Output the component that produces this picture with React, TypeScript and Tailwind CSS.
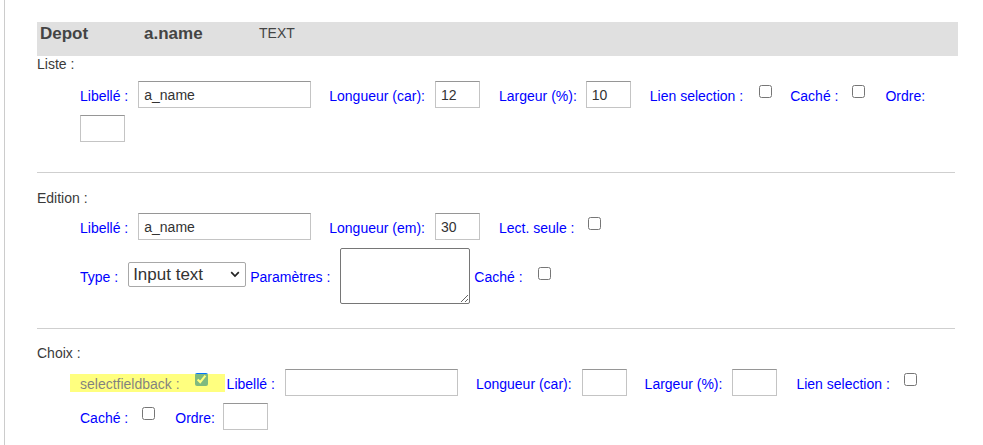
import React from "react";

const Lbl = ({ children, className = "" }: { children: React.ReactNode; className?: string }) => (
  <span className={`text-[#0000ff] whitespace-nowrap mt-[2px] leading-[16px] ${className}`}>{children}</span>
);

const TextIn = ({ w, value = "", className = "" }: { w: string; value?: string; className?: string }) => (
  <input
    type="text"
    defaultValue={value}
    className={`${w} h-[27px] shrink-0 border border-[#c4c4c4] border-t-[#969696] bg-white px-[5px] text-[14px] text-[#333] outline-none ${className}`}
  />
);

const Check = ({ checked = false, className = "" }: { checked?: boolean; className?: string }) => (
  <input
    type="checkbox"
    defaultChecked={checked}
    className={`m-0 mb-[6px] h-[13px] w-[13px] shrink-0 ${className}`}
  />
);

export default function App() {
  return (
    <div className="w-[983px] h-[445px] overflow-hidden bg-white font-['Liberation_Sans',Arial,sans-serif] text-[14px] text-[#3a3a3a]">
      <div className="ml-[4px] h-full border-l border-[#cccccc] pl-[32px] pt-[22px]">
        {/* header */}
        <div className="flex h-[34px] w-[921px] items-start bg-[#e0e0e0] pt-[2px] text-[#444]">
          <div className="w-[107px] pl-[3px] text-[17px] font-bold leading-[20px]">Depot</div>
          <div className="w-[115px] text-[17px] font-bold leading-[20px]">a.name</div>
          <div className="pt-[1px] text-[14px] leading-[16px]">TEXT</div>
        </div>

        {/* Liste */}
        <div className="leading-[16px]">Liste :</div>
        <div className="mt-[9px] pl-[43px]">
          <div className="flex h-[27px] items-center">
            <Lbl className="mr-[10px]">Libellé :</Lbl>
            <TextIn w="w-[173px]" value="a_name" className="mr-[18px]" />
            <Lbl className="mr-[10px]">Longueur (car):</Lbl>
            <TextIn w="w-[45px]" value="12" className="mr-[19px]" />
            <Lbl className="mr-[9px]">Largeur (%):</Lbl>
            <TextIn w="w-[45px]" value="10" className="mr-[19px]" />
            <Lbl className="mr-[16px]">Lien selection :</Lbl>
            <Check className="mr-[18px]" />
            <Lbl className="mr-[14px]">Caché :</Lbl>
            <Check className="mr-[20px]" />
            <Lbl>Ordre:</Lbl>
          </div>
          <div className="mt-[7px] flex h-[27px] items-center">
            <TextIn w="w-[45px]" />
          </div>
        </div>

        <div className="mt-[30px] h-px w-[918px] bg-[#cfcfcf]" />

        {/* Edition */}
        <div className="mt-[17px] leading-[16px]">Edition :</div>
        <div className="mt-[7px] pl-[43px]">
          <div className="flex h-[27px] items-center">
            <Lbl className="mr-[10px]">Libellé :</Lbl>
            <TextIn w="w-[173px]" value="a_name" className="mr-[18px]" />
            <Lbl className="mr-[10px]">Longueur (em):</Lbl>
            <TextIn w="w-[45px]" value="30" className="mr-[19px]" />
            <Lbl className="mr-[14px]">Lect. seule :</Lbl>
            <Check />
          </div>
          <div className="mt-[8px] flex h-[56px] items-center">
            <Lbl className="mr-[10px]">Type :</Lbl>
            <div className="relative mb-[3px] mr-[4px] h-[25px] w-[118px] shrink-0">
              <select
                defaultValue="text"
                className="h-full w-full appearance-none rounded-[2px] border border-[#a8a8a8] bg-white pl-[4px] text-[17px] leading-[23px] text-[#333] outline-none"
              >
                <option value="text">Input text</option>
              </select>
              <svg
                className="pointer-events-none absolute right-[6px] top-[9px]"
                width="10"
                height="7"
                viewBox="0 0 10 7"
              >
                <path d="M1.2 1.2 L5 5 L8.8 1.2" fill="none" stroke="#222" strokeWidth="1.7" />
              </svg>
            </div>
            <Lbl className="mr-[10px]">Paramètres :</Lbl>
            <textarea className="mr-[4px] h-[56px] w-[130px] shrink-0 rounded-[2px] border border-[#767676] bg-white outline-none" />
            <Lbl className="mr-[15px]">Caché :</Lbl>
            <Check />
          </div>
        </div>

        <div className="mt-[24px] h-px w-[918px] bg-[#cfcfcf]" />

        {/* Choix */}
        <div className="mt-[16px] leading-[16px]">Choix :</div>
        <div className="mt-[8px] pl-[43px]">
          <div className="flex h-[27px] items-center">
            <div className="relative mr-[19px] flex self-stretch items-center">
              <Lbl className="mr-[15px]">selectfieldback :</Lbl>
              <Check checked />
              <div className="pointer-events-none absolute left-[-10px] top-[5px] h-[18px] w-[155px] bg-[#ffff00]/50" />
            </div>
            <Lbl className="mr-[10px]">Libellé :</Lbl>
            <TextIn w="w-[173px]" className="mr-[18px]" />
            <Lbl className="mr-[10px]">Longueur (car):</Lbl>
            <TextIn w="w-[45px]" className="mr-[18px]" />
            <Lbl className="mr-[10px]">Largeur (%):</Lbl>
            <TextIn w="w-[45px]" className="mr-[19px]" />
            <Lbl className="mr-[14px]">Lien selection :</Lbl>
            <Check />
          </div>
          <div className="mt-[7px] flex h-[27px] items-center">
            <Lbl className="mr-[14px]">Caché :</Lbl>
            <Check className="mr-[20px]" />
            <Lbl className="mr-[8px]">Ordre:</Lbl>
            <TextIn w="w-[45px]" />
          </div>
        </div>
      </div>
    </div>
  );
}
